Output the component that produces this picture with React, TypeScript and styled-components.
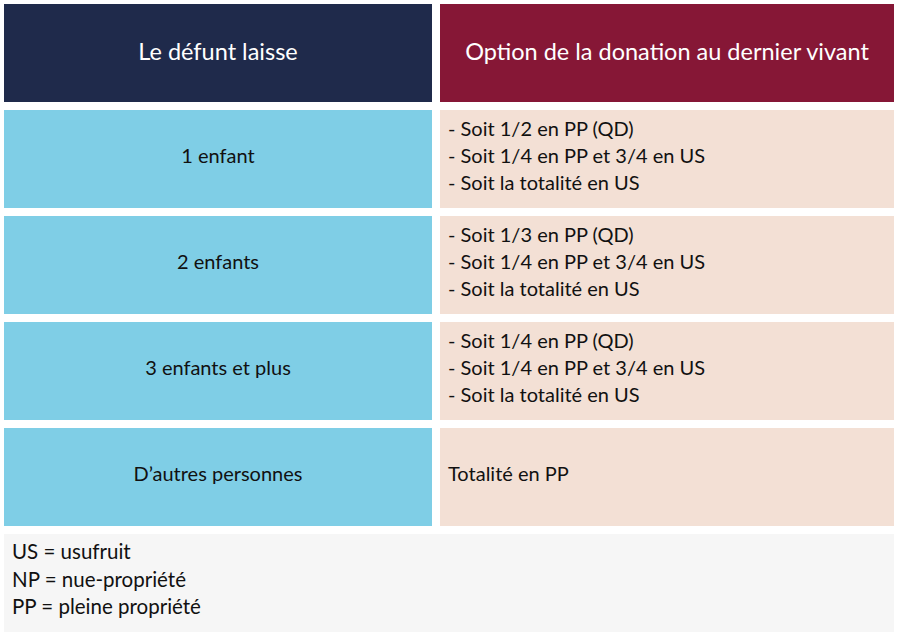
import React from "react";
import styled, { createGlobalStyle } from "styled-components";

const Global = createGlobalStyle`
  html, body { margin: 0; padding: 0; background: #ffffff; }
  body { font-family: Lato, "Noto Sans", sans-serif; color: #111111; }
`;

const Page = styled.div`
  width: 900px;
  height: 637px;
  box-sizing: border-box;
  padding: 4px 6px 5px 4px;
  display: grid;
  grid-template-columns: 428px 1fr;
  grid-template-rows: repeat(5, 98px) 1fr;
  column-gap: 8px;
  row-gap: 8px;
`;

type Tone = "navy" | "wine" | "sky" | "peach";

const isHead = (t: Tone) => t === "navy" || t === "wine";

const Cell = styled.div<{ $tone: Tone }>`
  display: flex;
  align-items: center;
  box-sizing: border-box;
  font-size: 20px;
  line-height: 27px;
  padding-bottom: ${(p) => (isHead(p.$tone) ? "3px" : "7px")};
  background: ${(p) =>
    p.$tone === "navy"
      ? "#1f2a4b"
      : p.$tone === "wine"
      ? "#861736"
      : p.$tone === "sky"
      ? "#7fcee6"
      : "#f3e0d5"};
  color: ${(p) => (isHead(p.$tone) ? "#ffffff" : "#111111")};
  justify-content: ${(p) => (p.$tone === "peach" ? "flex-start" : "center")};
  padding-left: ${(p) => (p.$tone === "peach" ? "8px" : "0")};
`;

const HeadText = styled.span`
  font-size: 23.5px;
`;

const Lines = styled.div`
  display: flex;
  flex-direction: column;
`;

const Legend = styled.div`
  grid-column: 1 / span 2;
  background: #f6f6f6;
  padding: 4px 8px;
  font-size: 20.5px;
  line-height: 27.5px;
  display: flex;
  flex-direction: column;
`;

const rows = [
  { who: "1 enfant", opts: ["- Soit 1/2 en PP (QD)", "- Soit 1/4 en PP et 3/4 en US", "- Soit la totalité en US"] },
  { who: "2 enfants", opts: ["- Soit 1/3 en PP (QD)", "- Soit 1/4 en PP et 3/4 en US", "- Soit la totalité en US"] },
  { who: "3 enfants et plus", opts: ["- Soit 1/4 en PP (QD)", "- Soit 1/4 en PP et 3/4 en US", "- Soit la totalité en US"] },
  { who: "D\u2019autres personnes", opts: ["Totalité en PP"] },
];

export default function App() {
  return (
    <>
      <Global />
      <Page>
        <Cell $tone="navy"><HeadText>Le défunt laisse</HeadText></Cell>
        <Cell $tone="wine"><HeadText>Option de la donation au dernier vivant</HeadText></Cell>
        {rows.map((r) => (
          <React.Fragment key={r.who}>
            <Cell $tone="sky">{r.who}</Cell>
            <Cell $tone="peach">
              <Lines>
                {r.opts.map((o) => (
                  <span key={o}>{o}</span>
                ))}
              </Lines>
            </Cell>
          </React.Fragment>
        ))}
        <Legend>
          <span>US = usufruit</span>
          <span>NP = nue-propriété</span>
          <span>PP = pleine propriété</span>
        </Legend>
      </Page>
    </>
  );
}
